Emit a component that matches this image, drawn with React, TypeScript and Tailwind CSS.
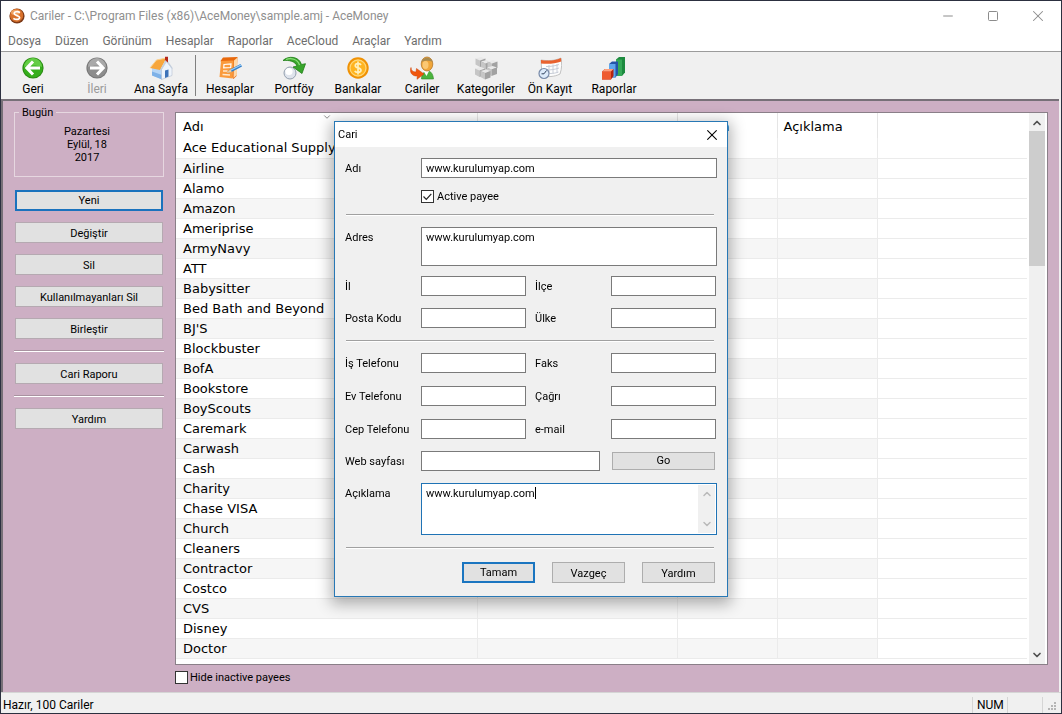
import React from 'react';
import { ChevronDown, ChevronUp, Minus, Square, X } from 'lucide-react';

const uiFont = "font-['Roboto','Open_Sans',sans-serif]";
const listFont = "font-['DejaVu_Sans',sans-serif]";

const menus = ['Dosya', 'Düzen', 'Görünüm', 'Hesaplar', 'Raporlar', 'AceCloud', 'Araçlar', 'Yardım'];

const payees = [
    'Ace Educational Supply', 'Airline', 'Alamo', 'Amazon', 'Ameriprise', 'ArmyNavy', 'ATT', 'Babysitter',
    'Bed Bath and Beyond', "BJ'S", 'Blockbuster', 'BofA', 'Bookstore', 'BoyScouts', 'Caremark', 'Carwash',
    'Cash', 'Charity', 'Chase VISA', 'Church', 'Cleaners', 'Contractor', 'Costco', 'CVS', 'Disney', 'Doctor',
];

const Logo = () => (
    <svg viewBox="0 0 16 16" className="size-4">
        <circle cx="8" cy="8" r="7.6" fill="#7d3a17" />
        <circle cx="7.6" cy="7.4" r="6.6" fill="#d9712b" />
        <ellipse cx="6.5" cy="4.5" rx="4.5" ry="2.8" fill="#f0a264" />
        <path d="M11 4.6C9 3.2 5.2 3.4 5.2 5.6c0 2.4 5.4 1.6 5.4 4 0 2.2-4 2.4-6.2.8" fill="none" stroke="#fff" strokeWidth="1.7" />
    </svg>
);

const BackIcon = () => (
    <svg viewBox="0 0 22 22" className="size-[22px]">
        <circle cx="11" cy="11" r="10.6" fill="#2a8a12" />
        <circle cx="11" cy="11" r="9.6" fill="#35ae1c" />
        <path d="M2 10a9 9 0 0 1 18 0c-5-2-13-2-18 0z" fill="#63cd45" />
        <path d="M18 11H6M11 4.5 4.8 11l6.2 6.5" fill="none" stroke="#fff" strokeWidth="3" />
    </svg>
);

const ForwardIcon = () => (
    <svg viewBox="0 0 22 22" className="size-[22px]">
        <circle cx="11" cy="11" r="10.6" fill="#777" />
        <circle cx="11" cy="11" r="9.6" fill="#8d8d8d" />
        <path d="M2 10a9 9 0 0 1 18 0c-5-2-13-2-18 0z" fill="#a9a9a9" />
        <path d="M4 11h12M11 4.5l6.2 6.5-6.2 6.5" fill="none" stroke="#fff" strokeWidth="3" />
    </svg>
);

const HomeIcon = () => (
    <svg viewBox="0 0 24 24" className="size-6">
        <path d="M3 12 8.5 8l5 6v9.5L3 19.5z" fill="#b5d5f6" />
        <path d="M3 15.5l10 3.5v4.5L3 19.5z" fill="#7db1e8" />
        <path d="M12.5 13.5 17.5 5.5l5.5 7v7L12.5 23.5z" fill="#eef4fb" stroke="#a8b6ca" strokeWidth=".5" />
        <path d="M1 12 7.5 4l10-2-6.5 12z" fill="#f7a63c" />
        <path d="M1 12 7.5 4l10-2" fill="none" stroke="#fbd08c" strokeWidth="1" />
        <path d="M11.5 14.5 17.3 4 23.3 12.5" fill="none" stroke="#c3cedc" strokeWidth="1.3" />
        <path d="M16 .8h3v5.7l-3-2.5z" fill="#b5281a" />
        <path d="M16 14.5l3.5-1V20.5L16 22z" fill="#3d72b8" />
    </svg>
);

const AccountsIcon = () => (
    <svg viewBox="0 0 24 24" className="size-6">
        <path d="M2.5 5 5 1.5 19.5 1l-1 19-3 3z" fill="#e8690d" />
        <path d="M3 5l12.5-.5-.8 18L1.5 21z" fill="#fa9a3c" />
        <path d="M16 4.5l3.5-3-.7 17.5-3.3 3z" fill="#ffd9a8" />
        <path d="M6 8.5l7-.5-.3 3.5-7 .3z" fill="none" stroke="#fff" strokeWidth="1.2" />
        <path d="M5 15h4.5M4.5 18.5l7.5.5" stroke="#ffe8cc" strokeWidth="1.3" />
        <path d="M9 16.5l3.5-3.3L22.5 8l1.5 2.5-10.5 5.5z" fill="#2f7fcb" />
        <path d="M12.5 14.3l10.5-5.3" stroke="#9fd0f8" strokeWidth="1.1" />
        <path d="M8.5 17l4-3.8 1.2 2.7z" fill="#f4cf9c" />
    </svg>
);

const PortfolioIcon = () => (
    <svg viewBox="0 0 24 24" className="size-6">
        <circle cx="8" cy="17" r="6" fill="#dfe4ec" stroke="#8b97a8" strokeWidth=".9" />
        <circle cx="7" cy="15.5" r="3.6" fill="#fff" />
        <path d="M1 4.5C6-.5 17 0 19.5 8.5l4-.8L20 17.5l-9-6.5 4-1C13 5 7 4 1 4.5z" fill="#38a52b" stroke="#1f7d18" strokeWidth=".8" />
        <path d="M4 3.5C9 1.5 15.5 3 17.5 9" fill="none" stroke="#8de07b" strokeWidth="1.2" />
    </svg>
);

// The coin's dollar mark is drawn as strokes
const CoinIcon = () => (
    <svg viewBox="0 0 22 22" className="size-[22px]">
        <circle cx="11" cy="11" r="10.7" fill="#f09205" />
        <circle cx="11" cy="11" r="8" fill="#ffb41f" stroke="#ffd878" strokeWidth="1.3" />
        <path d="M14 8C13 6 8.3 6.2 8.3 8.7c0 2.7 5.7 1.6 5.7 4.5 0 2.6-5.2 2.8-6.2.6M11 4.5v13" fill="none" stroke="#fff0bd" strokeWidth="1.7" />
    </svg>
);

const PayeeIcon = () => (
    <svg viewBox="0 0 24 24" className="size-6">
        <path d="M11.5 23c0-5 2.5-8 6-8s5.5 3 6 8z" fill="#4bb43e" stroke="#2f8727" strokeWidth=".6" />
        <path d="M13.5 15l3 5 2.5-5z" fill="#fff" />
        <ellipse cx="17" cy="8" rx="5.8" ry="7" fill="#f0a63a" stroke="#b5772a" strokeWidth=".8" />
        <path d="M11.5 6C13 .8 21 .2 22.7 6c-4-2-8-1-11.2 0z" fill="#a98a4e" />
        <ellipse cx="15.5" cy="9" rx="3" ry="4" fill="#fbc873" />
        <path d="M1 11.5c0 3 2 4.5 5 4.5l.5-3.5L14 18l-7 5.3.3-3.3C2 20.5-.8 16 1 11.5z" fill="#f0560d" stroke="#cc3f03" strokeWidth=".5" />
    </svg>
);

const Cube = ({ x, y }: { x: number; y: number }) => (
    <g transform={`translate(${x} ${y})`}>
        <path d="M0 1.5 5.5 0 10 1.5 4.5 3.5z" fill="#e9e9e9" />
        <path d="M0 1.5l4.5 2V10L0 7.5z" fill="#c6c6c6" />
        <path d="M4.5 3.5l5.5-2V8l-5.5 2z" fill="#a2a2a2" />
    </g>
);

const CategoriesIcon = () => (
    <svg viewBox="0 0 24 24" className="size-6">
        <Cube x={1.5} y={1} />
        <Cube x={7} y={4} />
        <Cube x={1} y={11} />
        <Cube x={13.5} y={4} />
        <Cube x={13} y={10} />
        <Cube x={6.5} y={13.5} />
    </svg>
);

const ScheduleIcon = () => (
    <svg viewBox="0 0 24 24" className="size-6">
        <path d="M3 4c7 1 13 1 20-2 1 5 1 10-1 16-6 3-12 3-18 2z" fill="#fdfdfd" stroke="#b4b4b4" strokeWidth=".8" />
        <path d="M3 4c7 1 13 1 20-2l.3 3.5C17 8 9 8 3 7.5z" fill="#e9622f" />
        <path d="M8 10.5c5 0 9-.5 13-2M8 14c5 0 9-.5 13-2M12 17.5c3 0 6-.5 8.5-1.5M11 9v9M15 8.5v9M19 8v9" fill="none" stroke="#c3c8d4" strokeWidth=".9" />
        <circle cx="6" cy="17.5" r="5" fill="#dceafa" stroke="#7689a8" strokeWidth="1.2" />
        <path d="M8.5 14.5 6 17.8H3.5" fill="none" stroke="#31435f" strokeWidth="1" />
    </svg>
);

const ReportsIcon = () => (
    <svg viewBox="0 0 24 24" className="size-6">
        <path d="M14 3.5 17 1h6v15.5L20 20h-6z" fill="#1d8a3f" />
        <path d="M14 3.5h6V20h-6z" fill="#35a957" />
        <path d="M7 8l3-2.5h6V18l-2.5 3.5H7z" fill="#2554a8" />
        <path d="M7 8h6.5v13.5H7z" fill="#5fa5ec" />
        <path d="M0 15.5 3 13h8.5v7L9 23.5H0z" fill="#b52410" />
        <path d="M0 15.5h9v8H0z" fill="#ee5a30" />
        <path d="M0 15.5 3 13h8.5L9 15.5z" fill="#ffa07c" />
    </svg>
);

const ToolButton = ({ label, icon, disabled }: { label: string; icon: React.ReactNode; disabled?: boolean }) => (
    <button type="button" disabled={disabled} className="flex w-16 flex-col items-center justify-start self-start pt-1 text-black disabled:text-[#9a9a9a]">
        <span className="flex h-6 items-center">{icon}</span>
        <span className="mt-px leading-4 whitespace-nowrap">{label}</span>
    </button>
);

const SideButton = ({ label, primary }: { label: string; primary?: boolean }) => (
    <button
        type="button"
        className={
            primary
                ? 'mx-px h-[21px] border-2 border-[#1a72bd] bg-[#e1e1e1] pt-px leading-4'
                : 'mx-px h-[21px] border border-[#b5a9b1] bg-[#e1e1e1] pt-0.5 leading-4'
        }
    >
        {label}
    </button>
);

const SideRule = () => <hr className="h-0.5 border-0 border-t border-[#a992a0] bg-white" />;

const Rule = () => <hr className="ml-px mr-[3px] h-0.5 border-0 border-t border-[#a0a0a0] bg-white" />;

const box = 'h-5 w-full min-w-0 border border-[#7a7a7a] bg-white px-1 pt-px leading-4 outline-none';

const Field = ({ id, label, second }: { id: string; label: string; second?: boolean }) => (
    <>
        <label htmlFor={id} className={second ? 'pt-0.5 pl-[9px]' : 'pt-0.5'}>{label}</label>
        <input id={id} type="text" className={box} />
    </>
);

const pairGrid = 'grid grid-cols-[76px_1fr_85px_1fr] items-center pr-px';

const DialogButton = ({ label, primary }: { label: string; primary?: boolean }) => (
    <button
        type="button"
        className={
            primary
                ? 'h-[21px] w-[73px] border-2 border-[#1a75c0] bg-[#e1e1e1] pt-px leading-4'
                : 'h-[21px] w-[73px] border border-[#adadad] bg-[#e1e1e1] pt-0.5 leading-4'
        }
    >
        {label}
    </button>
);

const PayeeDialog = () => (
    <div className="pointer-events-none fixed inset-0 flex items-center justify-center pt-1">
        <div
            role="dialog"
            aria-labelledby="dialog-title"
            className="pointer-events-auto w-[394px] border border-[#2878b5] bg-[#f0f0f0] text-[11px] leading-4 text-black shadow-[0_4px_14px_3px_rgba(0,0,0,0.3)]"
        >
            <div className="flex h-[25px] items-center justify-between bg-white pr-2 pl-[3px]">
                <h2 id="dialog-title">Cari</h2>
                <button type="button" aria-label="Kapat"><X className="size-[14px] scale-125" strokeWidth={1.5} /></button>
            </div>
            <form className="flex flex-col px-[10px] pt-[11px] pb-[13px]">
                <div className="grid grid-cols-[76px_1fr] items-center">
                    <label htmlFor="name" className="pt-0.5">Adı</label>
                    <input id="name" type="text" defaultValue="www.kurulumyap.com" className={box} />
                </div>
                <label className="mt-[10px] ml-[76px] flex h-4 items-center gap-[3px]">
                    <span className="relative flex size-[13px]">
                        <input type="checkbox" defaultChecked className="peer size-[13px] appearance-none border border-[#333] bg-white" />
                        <svg viewBox="0 0 13 13" className="pointer-events-none absolute inset-0 hidden peer-checked:block">
                            <path d="M2.5 6.5l2.8 2.8 5-5.5" fill="none" stroke="#222" strokeWidth="1.2" />
                        </svg>
                    </span>
                    <span className="pt-0.5">Active payee</span>
                </label>
                <div className="mt-[10px]"><Rule /></div>

                <div className="mt-[11px] grid grid-cols-[76px_1fr]">
                    <label htmlFor="address" className="pt-[3px]">Adres</label>
                    <textarea id="address" defaultValue="www.kurulumyap.com" className="h-[39px] resize-none border border-[#7a7a7a] bg-white px-1 py-0.5 leading-4 outline-none" />
                </div>
                <div className={`mt-[10px] gap-y-3 ${pairGrid}`}>
                    <Field id="city" label="İl" />
                    <Field id="district" label="İlçe" second />
                    <Field id="zip" label="Posta Kodu" />
                    <Field id="country" label="Ülke" second />
                </div>
                <div className="mt-3"><Rule /></div>

                <div className={`mt-[11px] gap-y-[13px] ${pairGrid}`}>
                    <Field id="work" label="İş Telefonu" />
                    <Field id="fax" label="Faks" second />
                    <Field id="home" label="Ev Telefonu" />
                    <Field id="pager" label="Çağrı" second />
                    <Field id="mobile" label="Cep Telefonu" />
                    <Field id="email" label="e-mail" second />
                </div>
                <div className="mt-3 grid grid-cols-[76px_1fr_103px] items-center pr-0.5">
                    <label htmlFor="web" className="pt-0.5">Web sayfası</label>
                    <div className="pr-3"><input id="web" type="text" className={box} /></div>
                    <button type="button" className="h-[18px] border border-[#adadad] bg-[#e1e1e1] leading-4">Go</button>
                </div>
                <div className="mt-3 grid grid-cols-[76px_1fr]">
                    <label htmlFor="notes" className="pt-[3px]">Açıklama</label>
                    <div className="relative flex h-[52px] border border-[#1f73b5] bg-white p-px">
                        <textarea id="notes" defaultValue="www.kurulumyap.com" className="min-w-0 flex-1 resize-none overflow-hidden bg-white px-[3px] py-px leading-4 outline-none" />
                        <span className="absolute top-[3px] left-[113px] h-3 w-px bg-black" />
                        <div className="flex w-[17px] flex-col items-center justify-between bg-[#f0f0f0] py-[3px] text-[#b9b9b9]">
                            <ChevronUp className="size-3" strokeWidth={3} />
                            <ChevronDown className="size-3" strokeWidth={3} />
                        </div>
                    </div>
                </div>
                <div className="mt-3"><Rule /></div>
                <div className="mt-[13px] flex justify-end gap-[17px] pr-0.5">
                    <DialogButton label="Tamam" primary />
                    <DialogButton label="Vazgeç" />
                    <DialogButton label="Yardım" />
                </div>
            </form>
        </div>
    </div>
);

const Sidebar = () => (
    <aside className="flex w-[150px] shrink-0 flex-col gap-[11px] text-[11px] text-black">
        <fieldset className="-mt-1.5 mb-0.5 h-[71px] border border-[#e6d7e0] leading-[13px]">
            <legend className="ml-1 px-[3px] text-left leading-[13px]">Bugün</legend>
            <p className="pt-1.5 pr-1 text-center">Pazartesi<br />Eylül, 18<br />2017</p>
        </fieldset>
        <SideButton label="Yeni" primary />
        <SideButton label="Değiştir" />
        <SideButton label="Sil" />
        <SideButton label="Kullanılmayanları Sil" />
        <SideButton label="Birleştir" />
        <SideRule />
        <SideButton label="Cari Raporu" />
        <SideRule />
        <SideButton label="Yardım" />
    </aside>
);

const PayeeList = () => (
    <div className="flex flex-1 border border-[#8a7f88] bg-white">
        <div className="flex min-w-0 flex-1 flex-col pr-0.5">
            <table className={`w-full table-fixed border-collapse text-left text-[13px] text-black ${listFont}`}>
                <colgroup>
                    <col className="w-[301px]" />
                    <col className="w-[200px]" />
                    <col className="w-[100px]" />
                    <col className="w-[100px]" />
                    <col />
                </colgroup>
                <thead>
                    <tr className="h-[25px]">
                        <th className="relative border-r border-[#e5e5e5] py-0 pt-0.5 pl-[7px] font-normal">
                            Adı
                            <ChevronDown className="absolute -top-px left-[146px] size-[10px] text-[#777]" strokeWidth={2} />
                        </th>
                        <th className="border-r border-[#e5e5e5]" />
                        <th className="border-r border-[#e5e5e5] py-0 pt-0.5 pl-[6px] font-normal">Telefon</th>
                        <th className="border-r border-[#e5e5e5] py-0 pt-0.5 pl-[6px] font-normal">Açıklama</th>
                        <th />
                    </tr>
                </thead>
                <tbody>
                    {payees.map((name, i) => {
                        const cell = i % 2 ? 'border-r border-[#ebebeb] bg-[#f6f6f6] p-0' : 'border-r border-[#ebebeb] p-0';
                        return (
                            <tr key={name} className="h-5 border-b border-[#ebebeb] leading-[19px]">
                                <td className={`${cell} pl-[7px]! whitespace-nowrap`}>{name}</td>
                                <td className={cell} />
                                <td className={cell} />
                                <td className={cell} />
                                <td />
                            </tr>
                        );
                    })}
                </tbody>
            </table>
        </div>
        <div className="mr-0.5 flex w-4 flex-col items-center bg-[#f0f0f0] text-[#505050]">
            <ChevronUp className="mt-1 mb-0.5 size-3 shrink-0" strokeWidth={3.5} />
            <div className="h-[135px] w-full bg-[#cdcdcd]" />
            <ChevronDown className="mt-auto mb-[3px] size-3" strokeWidth={3.5} />
        </div>
    </div>
);

const App = () => (
    <div className={`flex min-h-screen flex-col border border-[#2c3040] bg-[#f0f0f0] text-[12px] ${uiFont}`}>
        <header className="border-b border-[#9b9b9b] bg-white">
            <div className="flex h-[29px] items-center pl-2">
                <Logo />
                <h1 className="ml-[5px] flex-1 text-[#8f8f8f]">Cariler - C:\Program Files (x86)\AceMoney\sample.amj - AceMoney</h1>
                <div className="flex items-center gap-[33px] pr-[17px] text-[#8c8c8c]">
                    <button type="button" aria-label="Simge durumuna küçült"><Minus className="size-3 scale-125" strokeWidth={1.6} /></button>
                    <button type="button" aria-label="Ekranı kapla"><Square className="size-3" strokeWidth={2} /></button>
                    <button type="button" aria-label="Kapat"><X className="size-3 scale-150" strokeWidth={1.4} /></button>
                </div>
            </div>
            <nav className="flex h-[21px] items-center gap-[14px] pl-[7px] text-[#6d6d6d]">
                {menus.map((m) => (
                    <button key={m} type="button">{m}</button>
                ))}
            </nav>
        </header>

        <div className="flex h-[47px]">
            <ToolButton label="Geri" icon={<BackIcon />} />
            <ToolButton label="İleri" icon={<ForwardIcon />} disabled />
            <ToolButton label="Ana Sayfa" icon={<HomeIcon />} />
            <div className="mx-0.5 my-[3px] w-px bg-[#808080]" />
            <ToolButton label="Hesaplar" icon={<AccountsIcon />} />
            <ToolButton label="Portföy" icon={<PortfolioIcon />} />
            <ToolButton label="Bankalar" icon={<CoinIcon />} />
            <ToolButton label="Cariler" icon={<PayeeIcon />} />
            <ToolButton label="Kategoriler" icon={<CategoriesIcon />} />
            <ToolButton label="Ön Kayıt" icon={<ScheduleIcon />} />
            <ToolButton label="Raporlar" icon={<ReportsIcon />} />
        </div>

        <main className="mr-0.5 flex flex-1 gap-[11px] border-t-2 border-l-2 border-[#777078] bg-[#cdafc4] pt-[11px] pr-[11px] pb-2 pl-[11px]">
            <Sidebar />
            <section className="flex min-w-0 flex-1 flex-col">
                <PayeeList />
                <label className="mt-1.5 flex h-[13px] items-center gap-0.5 text-[11px] text-black">
                    <input type="checkbox" className="size-[13px] appearance-none border border-[#333] bg-white" />
                    <span className="pt-0.5">Hide inactive payees</span>
                </label>
            </section>
        </main>

        <footer className="flex h-[21px] items-center border-t border-[#d5d5d5] pt-1 pl-0.5 text-black">
            <span className="flex-1">Hazır, 100 Cariler</span>
            <span className="flex h-4 w-9 items-center border-x border-[#d5d5d5] pl-1">NUM</span>
            <span className="h-4 w-[35px] border-r border-[#d5d5d5]" />
            <svg viewBox="0 0 10 10" className="mt-1 mr-1 ml-1 size-[10px]" fill="#b5b5b5">
                <path d="M7 0h2v2H7zM4 3h2v2H4zM7 3h2v2H7zM1 6h2v2H1zM4 6h2v2H4zM7 6h2v2H7z" />
            </svg>
        </footer>
        <PayeeDialog />
    </div>
);

export default App;
